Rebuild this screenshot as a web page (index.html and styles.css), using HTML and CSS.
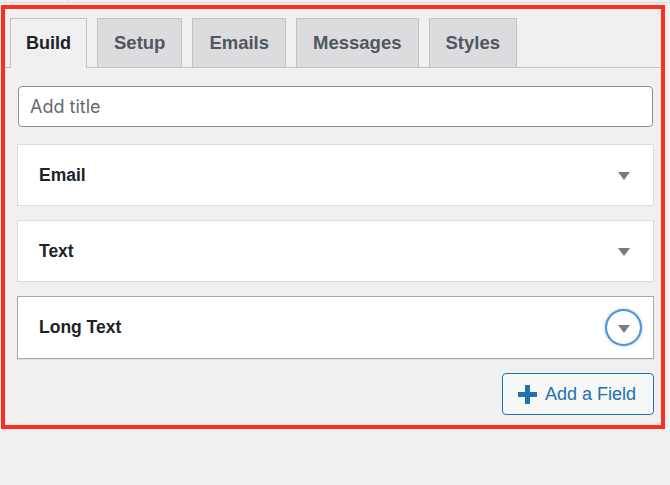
FILE: index.html
```html
<!DOCTYPE html>
<html lang="en">
<head>
<meta charset="utf-8">
<title>Form builder</title>
<link rel="stylesheet" href="styles.css">
</head>
<body>
<div class="topstrip"><span class="topsep"></span></div>
<div class="frame">
  <div class="tabs">
    <div class="tab active">Build</div>
    <div class="tab">Setup</div>
    <div class="tab">Emails</div>
    <div class="tab">Messages</div>
    <div class="tab">Styles</div>
  </div>
  <div class="content">
    <div class="title-input"><span class="placeholder">Add title</span></div>
    <div class="field">
      <span class="label">Email</span>
      <span class="toggle"><span class="tri"></span></span>
    </div>
    <div class="field">
      <span class="label">Text</span>
      <span class="toggle"><span class="tri"></span></span>
    </div>
    <div class="field field-open">
      <span class="label">Long Text</span>
      <span class="toggle focused"><span class="tri"></span></span>
    </div>
    <div class="actions">
      <button class="add-btn" type="button">
        <svg class="plus" width="19" height="19" viewBox="0 0 19 19" aria-hidden="true">
          <rect x="7" y="0" width="5" height="19" fill="#2271b1"/>
          <rect x="0" y="7" width="19" height="5" fill="#2271b1"/>
        </svg>
        <span>Add a Field</span>
      </button>
    </div>
  </div>
</div>
</body>
</html>
```
FILE: styles.css
```css
html, body {
  margin: 0;
  padding: 0;
  background: #f0f0f1;
  font-family: "Liberation Sans", Arial, sans-serif;
  color: #1d2327;
}

.topstrip {
  height: 2px;
  border-bottom: 1px solid #dcdcde;
  position: relative;
}
.topsep {
  position: absolute;
  left: 67px;
  top: 0;
  width: 1px;
  height: 2px;
  background: #dcdcde;
}

.frame {
  margin: 2px 5px 0 1px;
  width: 656px;
  height: 416px;
  border: 4px solid #fe2e20;
}

.tabs {
  display: flex;
  gap: 10px;
  padding: 9px 0 0 5px;
  border-bottom: 1px solid #c3c4c7;
}

.tab {
  height: 49px;
  box-sizing: border-box;
  padding: 0 16px;
  border: 1px solid #c3c4c7;
  border-bottom: none;
  background: #dcdcde;
  color: #50575e;
  font-weight: bold;
  font-size: 18.5px;
  display: flex;
  align-items: center;
}
.tab.active {
  background: #f0f0f1;
  color: #1d2327;
  height: 50px;
  margin-bottom: -1px;
  padding: 0 15px;
  font-size: 18px;
}

.content {
  padding: 18px 7px 0 12px;
  display: flex;
  flex-direction: column;
}

.title-input {
  margin: 0 1px;
  height: 41px;
  box-sizing: border-box;
  border: 1px solid #8c8f94;
  border-radius: 4px;
  background: #fff;
  display: flex;
  align-items: center;
  padding-left: 11px;
}
.placeholder {
  color: #646970;
  font-family: Inter, "Liberation Sans", sans-serif;
  font-size: 18px;
}

.field {
  margin-top: 14px;
  height: 62px;
  box-sizing: border-box;
  background: #fff;
  border: 1px solid #dcdcde;
  display: flex;
  align-items: center;
  justify-content: space-between;
  padding: 0 13px 0 21px;
}
.title-input + .field {
  margin-top: 17px;
}
.field-open {
  height: 63px;
  border-color: #a7aaad;
  box-shadow: 0 1px 1px rgba(0, 0, 0, 0.08);
}

.label {
  font-weight: bold;
  font-size: 17.5px;
  color: #1d2327;
}

.toggle {
  width: 33px;
  height: 33px;
  border-radius: 50%;
  display: flex;
  align-items: center;
  justify-content: center;
}
.toggle.focused {
  box-shadow: 0 0 0 2px #4f94d4, 0 0 3px 2px rgba(79, 148, 212, 0.6);
}
.tri {
  width: 0;
  height: 0;
  border-left: 6px solid transparent;
  border-right: 6px solid transparent;
  border-top: 8px solid #787c82;
  margin-top: 2px;
}

.actions {
  display: flex;
  justify-content: flex-end;
  margin-top: 14px;
}

.add-btn {
  height: 42px;
  width: 152px;
  box-sizing: border-box;
  border: 1px solid #2271b1;
  border-radius: 4px;
  background: #f6f7f7;
  color: #2271b1;
  font-family: "Liberation Sans", Arial, sans-serif;
  font-size: 18px;
  display: flex;
  align-items: center;
  justify-content: center;
  gap: 8px;
  padding: 0 12px 0 10px;
  cursor: pointer;
}
.plus {
  flex: none;
}
```
